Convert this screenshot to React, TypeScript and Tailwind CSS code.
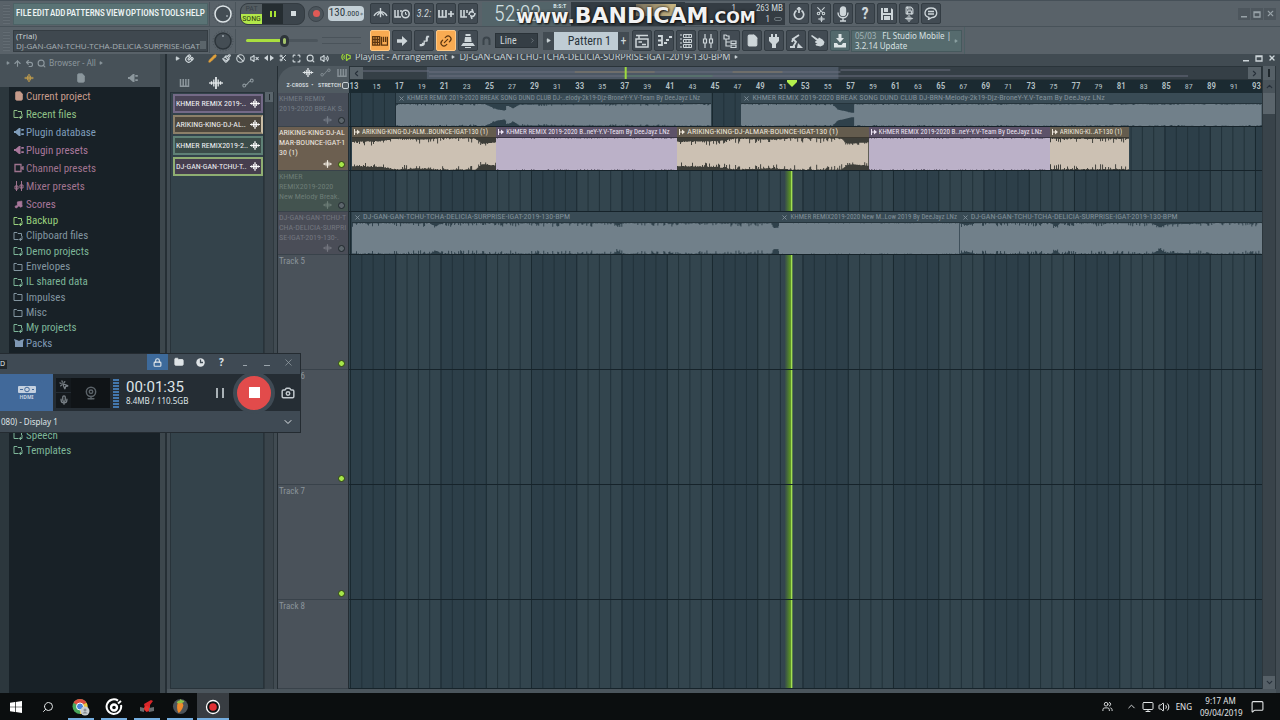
import React from "react";
import {
  ArrowUp, Ban, Camera, ChevronDown, ChevronLeft, ChevronRight, ChevronUp,
  File, Folder, Link2, Lock, Magnet, Maximize, Mic, MousePointerClick,
  Music, Pencil, Play, Save, Search, Undo2, Users,
  Volume2, VolumeX, Webcam, X, MessageSquare, Paintbrush, Monitor, Scissors,
} from "lucide-react";

const narrow = "font-['Roboto_Condensed','Roboto',sans-serif]";

/* ---------- small drawings ---------- */
function WaveIcon({ className = "h-3 w-3" }: { className?: string }) {
  return (
    <svg viewBox="0 0 14 12" className={className} fill="none" stroke="currentColor">
      <path d="M0 6h14" strokeWidth="1.300" />
      <path d="M2.500 4.200v3.600M4.800 2.500v7M9.200 2.500v7M11.500 4.200v3.600" strokeWidth="1.300" />
      <path d="M7 0v12" strokeWidth="1.800" />
    </svg>
  );
}
function PianoIcon({ className = "h-3 w-3" }: { className?: string }) {
  return (
    <svg viewBox="0 0 12 10" className={className} fill="none" stroke="currentColor" strokeWidth="1.900">
      <path d="M1 0v9h10V0M4.400 0v9M7.700 0v9" />
    </svg>
  );
}
function CurveIcon({ className = "h-3 w-3" }: { className?: string }) {
  return (
    <svg viewBox="0 0 14 12" className={className} fill="none" stroke="currentColor" strokeWidth="1.300">
      <circle cx="2.500" cy="9" r="1.700" />
      <circle cx="11.500" cy="3" r="1.700" />
      <path d="M4 8.500c3 0 3-4.500 6-5" />
    </svg>
  );
}
function MetronomeIcon() {
  return (
    <svg viewBox="0 0 16 14" className="h-[13px] w-[15px]" fill="none" stroke="currentColor" strokeWidth="1.500">
      <path d="M8 1v10M8 5 4.500 9M8 5l3.500 4M1 9.500C3 6 5 5 8 5s5 1 7 4.500" />
    </svg>
  );
}
function PianoClockIcon() {
  return (
    <svg viewBox="0 0 16 12" className="h-3 w-4" fill="none" stroke="currentColor" strokeWidth="1.500">
      <path d="M1 2v7h6M4 2v7M7 2v2" />
      <circle cx="11.500" cy="6" r="3.700" />
      <path d="M11.500 4v2.300H13" strokeWidth="1" />
    </svg>
  );
}
function PianoPlusIcon() {
  return (
    <svg viewBox="0 0 16 12" className="h-3 w-4" fill="none" stroke="currentColor" strokeWidth="1.700">
      <path d="M1 2v7h7V2M4.500 2v7M10 6h6M13 3v6" />
    </svg>
  );
}
function PianoLoopIcon() {
  return (
    <svg viewBox="0 0 16 12" className="h-3 w-4" fill="none" stroke="currentColor" strokeWidth="1.600">
      <path d="M1 2v7h6M4 2v7M7 2v3M9 7c0-3 2-4 4-3l-1-3M15 5c0 3-2 4-4 3l1 3" />
    </svg>
  );
}
function TypeKeysIcon() {
  return (
    <svg viewBox="0 0 16 10" className="h-[10px] w-4" fill="none" stroke="currentColor" strokeWidth="1.300">
      <path d="M.7.700h7v8.500h-7zM1 3.500h6M1 6.300h6M3 1v8M5.400 1v8M9.500.700v8.500h6V.7M11.500.700v5.300M13.600.700v5.300" />
    </svg>
  );
}
function NotesIcon() {
  return (
    <svg viewBox="0 0 14 14" className="h-3 w-3" fill="currentColor">
      <path d="M10 1h3v2h-1.500v3c0 1-.5 2-2 2H8v2c0 2-1.500 3-4 3H2v-2.500h2.500V9h2V6.500h2.500V3.500z" />
    </svg>
  );
}
function BlenderIcon() {
  return (
    <svg viewBox="0 0 14 14" className="h-[14px] w-[14px]" fill="currentColor">
      <path d="M4.500 0h5v2h-5zM4 3h6l.6 5H3.400zM2 9h10l2 3H0zM4 13h6v1H4z" />
    </svg>
  );
}
function PlaylistIcon() {
  return (
    <svg viewBox="0 0 14 14" className="h-[14px] w-[14px]" fill="none" stroke="currentColor" strokeWidth="1.500">
      <path d="M1 1.500h12M1 5h12v8H1zM3.500 8H7M7 10.500h4M4 1.500v3" />
    </svg>
  );
}
function RollIcon() {
  return (
    <svg viewBox="0 0 15 13" className="h-[13px] w-[15px]" fill="none" stroke="currentColor" strokeWidth="1.800">
      <path d="M1 2h4v9H1M1 6.500h4M7 9h3M9 6h3M12 3h3" />
    </svg>
  );
}
function RackIcon() {
  return (
    <svg viewBox="0 0 14 14" className="size-[14px]" fill="none" stroke="currentColor" strokeWidth="1">
      <path d="M1 1h2M1 5h2M1 9h2M1 13h2M4.500.500h8v3h-8zM4.500 5.500h8v3h-8zM4.500 10.500h8v3h-8zM7 .500v3M10 .500v3M7 5.500v3M10 5.500v3M7 10.500v3M10 10.500v3" />
    </svg>
  );
}
function MixerIcon() {
  return (
    <svg viewBox="0 0 12 14" className="h-[14px] w-3" fill="none" stroke="currentColor" strokeWidth="1.200">
      <path d="M3 0v5M3 9v5M9 0v5M9 9v5M1.500 5h3v4h-3zM7.500 5h3v4h-3z" />
    </svg>
  );
}
function TreeIcon() {
  return (
    <svg viewBox="0 0 14 14" className="size-[14px]" fill="none" stroke="currentColor" strokeWidth="1.200">
      <path d="M1 1h2l1 1h2v3H1zM3 5v7h4M3 8h4M8 7h5v2.500H8zM8 11h5v2.500H8z" />
    </svg>
  );
}
function PlugDownIcon() {
  return (
    <svg viewBox="0 0 12 14" className="h-[14px] w-3" fill="currentColor">
      <path d="M3 0h2v3h2V0h2v3h2v4L8 10v4H4v-4L1 7V3h2z" />
    </svg>
  );
}
function DiggerIcon() {
  return (
    <svg viewBox="0 0 14 14" className="size-[14px]" fill="none" stroke="currentColor" strokeWidth="1.800">
      <path d="M10 1 4 5l3 3-3 5M4 5l-1 3M1 13h5" />
      <path d="M9 9l5 5H8z" fill="currentColor" stroke="none" />
    </svg>
  );
}
function PointHandIcon() {
  return (
    <svg viewBox="0 0 14 12" className="h-3 w-[14px]" fill="currentColor">
      <path d="M0 1l1-1 6 4 1-1.500 3.500 2L13.500 7l-1 3-3 1.500L5 10.500l-.5-1.500 2-.5L4 7.500l.5-1.500L6 6z" />
    </svg>
  );
}
function DropIcon() {
  return (
    <svg viewBox="0 0 14 14" className="size-[14px]" fill="currentColor">
      <path d="M5.500 0h3v4H11L7 8.500 3 4h2.500zM1 9h3l1.500 2h3L10 9h3v4.500H1z" />
    </svg>
  );
}
function WinMin() {
  return <svg viewBox="0 0 8 8" className="h-2 w-2"><path d="M1 6h6v1.500H1z" fill="currentColor" /></svg>;
}
function WinMax() {
  return <svg viewBox="0 0 8 8" className="h-2 w-2"><path d="M1 2h6v5H1zM1 2.700h6" fill="none" stroke="currentColor" strokeWidth="1.300" /></svg>;
}
function FolderIcon({ arrow }: { arrow?: boolean }) {
  return (
    <svg viewBox="0 0 11 10" className="h-[10px] w-[11px]" fill="none" stroke="currentColor" strokeWidth="1">
      {arrow ? <path d="M5.500 8.500H1v-7h3l1 1h3.500V5M9 5v3.500H6.500M8 6.800 6.300 8.500 8 10" /> : <path d="M1 8.500v-7h2.500l1 1H9v6z" />}
    </svg>
  );
}
function PlugIcon({ className = "h-[10px] w-[10px]" }: { className?: string }) {
  return (
    <svg viewBox="0 0 10 10" className={className} fill="currentColor">
      <path d="M0 4h1.500L5 1h1.500v8H5L1.500 6H0zM7.300 2h2.500v1.800H7.300zM7.300 6.200h2.500V8H7.300z" />
    </svg>
  );
}

/* ---------- toolbar ---------- */
function ToolButton({ label, children, tone = "dark" }: { label: string; children: React.ReactNode; tone?: "dark" | "lit" | "teal" }) {
  const bg =
    tone === "lit"
      ? "bg-[#f9ab52] border-[#ffc985] text-[#5b3510]"
      : tone === "teal"
        ? "bg-[#52696c] border-[#41555a] text-[#dde5e6]"
        : "bg-[#424b53] border-[#333c43] text-[#ced6da]";
  return (
    <button aria-label={label} className={"flex h-[21px] w-5 shrink-0 items-center justify-center rounded-xs border " + bg}>
      {children}
    </button>
  );
}

function Knob({ bright }: { bright?: boolean }) {
  return (
    <svg viewBox="0 0 24 24" className="h-6 w-6">
      <circle cx="12" cy="12" r="10" fill="none" stroke="#434c53" strokeWidth="1" strokeDasharray="1 2" />
      <circle cx="12" cy="12" r="8" fill="#444d54" stroke={bright ? "#dce3e6" : "#2c343a"} strokeWidth="1.500" />
      <circle cx={bright ? 16 : 12} cy={bright ? 14 : 7} r="1" fill="#9ba5ab" />
    </svg>
  );
}

function Grip() {
  return <div className="h-5 w-[7px] shrink-0 bg-[repeating-linear-gradient(0deg,#636c73_0px,#636c73_1px,#565f66_1px,#565f66_3px)]" />;
}

function Toolbar() {
  return (
    <header className={"relative z-10 shrink-0 bg-[#596269] text-[#cfd7da] " + narrow}>
      <div className="flex h-[27px] items-center border-t border-b border-t-[#465058] border-b-[#485259]">
        <div className="flex w-[13px] shrink-0 justify-center"><Grip /></div>
        <nav className="flex h-[22px] w-[195px] shrink-0 items-center justify-between border border-[#4c6265] bg-[#5a7375] px-[2px] text-[9px] font-medium text-[#eef4f4]">
          {["FILE", "EDIT", "ADD", "PATTERNS", "VIEW", "OPTIONS", "TOOLS", "HELP"].map((m) => (
            <button key={m}>{m}</button>
          ))}
        </nav>
        <div className="ml-px flex w-[27px] shrink-0 justify-center border-x border-[#4a545b]"><Knob bright /></div>
        <div className="ml-1 flex h-[22px] w-[65px] shrink-0 overflow-hidden rounded-lg border border-[#343c42] bg-[#333b42]">
          <button className="flex w-[21px] flex-col text-center text-[8px] leading-[10px]">
            <span className="w-full bg-[#535c61] text-[#394147]">PAT</span>
            <span className="w-full bg-[#b2e84a] text-[#2c3a12]">SONG</span>
          </button>
          <button aria-label="Pause" className="flex w-[21px] items-center justify-center gap-[2px] bg-[#252d31]">
            <i className="h-[6px] w-[2px] bg-[#a9e234]" />
            <i className="h-[6px] w-[2px] bg-[#a9e234]" />
          </button>
          <button aria-label="Stop" className="flex flex-1 items-center justify-center bg-[#3c454c]">
            <i className="size-[5px] bg-[#d5dcdf]" />
          </button>
        </div>
        <button aria-label="Record" className="ml-[3px] flex size-4 shrink-0 items-center justify-center rounded-full border border-[#3c444b] bg-[#4b545b]">
          <i className="size-[7px] rounded-full bg-[#e05a56]" />
        </button>
        <div className="ml-1 flex h-[15px] w-9 shrink-0 items-center justify-center rounded-sm bg-[#c3cfd6] text-[11px] text-[#2d3840]">
          130<span className="text-[8px]">.000</span><span className="pl-px text-[4px] text-[#7c8990]">◆</span>
        </div>
        <div className="ml-[6px] flex shrink-0 gap-[2px]">
          <ToolButton label="Metronome"><MetronomeIcon /></ToolButton>
          <ToolButton label="Wait for input"><PianoClockIcon /></ToolButton>
          <ToolButton label="Countdown"><i className="text-[10px]">3.2:</i></ToolButton>
          <ToolButton label="Overdub"><PianoPlusIcon /></ToolButton>
          <ToolButton label="Loop recording"><PianoLoopIcon /></ToolButton>
        </div>
        <div className="ml-1 flex h-6 w-[85px] shrink-0 bg-[#536469] pl-3 text-[22px] leading-6 font-light text-[#d3e1e3]">
          52:02<span className="pl-3 text-[6px] leading-[8px] font-bold">B:S:T</span>
        </div>
        <div className="ml-1 flex h-6 w-[114px] shrink-0 justify-center bg-[#323b42]">
          <i className="ml-14 mt-[2px] h-3 w-10 bg-gradient-to-r from-[#77705e] to-[#cdb983]" />
        </div>
        <div className="flex h-[22px] w-[100px] shrink-0 flex-col bg-[#343c43] px-[2px] text-[9px] leading-[11px]">
          <div className="flex justify-end gap-5"><span>1</span><span>263 MB</span></div>
          <div className="flex items-center justify-end gap-1"><span>1</span><i className="mr-px h-1 w-2 rounded-full border border-[#6c767c]" /></div>
        </div>
        <div className="ml-1 flex shrink-0 gap-[2px]">
          <ToolButton label="Restart"><svg viewBox="0 0 14 14" className="size-[14px]" fill="none" stroke="currentColor" strokeWidth="1.700"><path d="M4.500 3.500a4.700 4.700 0 1 0 5 0M7 6V1M5 2.500 7 .500l2 2" /></svg></ToolButton>
          <ToolButton label="Cut"><span className="flex flex-col items-center"><Scissors size={10} strokeWidth={2.5} className="-rotate-90" /><WaveIcon className="h-[6px] w-[9px]" /></span></ToolButton>
          <ToolButton label="Record audio"><svg viewBox="0 0 12 16" className="h-4 w-3" fill="none" stroke="currentColor" strokeWidth="1.400"><rect x="3.500" y="1" width="5" height="8.500" rx="2.500" fill="currentColor" /><path d="M1 6.500c0 7 10 7 10 0M6 12v3M3 15h6" /></svg></ToolButton>
          <ToolButton label="Help"><b className="text-[16px]">?</b></ToolButton>
          <ToolButton label="Save"><svg viewBox="0 0 12 12" className="size-3" fill="currentColor"><path d="M0 0h2v5h8V0l2 1.500V12h-2V7H2v5H0zM3 0h4v4H3zM3 8h6v4H3z" /></svg></ToolButton>
          <ToolButton label="Render"><span className="flex flex-col items-center"><Save size={9} strokeWidth={3} /><WaveIcon className="h-[7px] w-[10px]" /></span></ToolButton>
          <ToolButton label="Feedback"><svg viewBox="0 0 14 13" className="h-[13px] w-[14px]" fill="none" stroke="currentColor" strokeWidth="1.300"><path d="M5 10.500C-1 9 0 1 7 1s8 9 .5 9.700L4.500 12.500zM4 4.500h6M4 7h6" /></svg></ToolButton>
        </div>
        <div className="ml-auto mr-1 flex shrink-0 gap-px text-[#98a2a8]">
          <button aria-label="Minimize" className="flex size-3 items-center justify-center bg-[#4d565d]"><WinMin /></button>
          <button aria-label="Maximize" className="flex size-3 items-center justify-center bg-[#4d565d]"><WinMax /></button>
          <button aria-label="Close" className="flex size-3 items-center justify-center bg-[#4d565d]"><X size={9} strokeWidth={3} /></button>
        </div>
      </div>
      <div className="flex h-[27px] items-center">
        <div className="flex w-[13px] shrink-0 justify-center"><Grip /></div>
        <div className="flex h-[22px] w-[195px] shrink-0 items-end justify-between border border-[#343c42] bg-[#3f484f] px-[2px] font-['Open_Sans'] text-[8px] leading-[10px]">
          <div className="whitespace-nowrap"><div>(Trial)</div><div className="text-[#a7b0b5]">DJ-GAN-GAN-TCHU-TCHA-DELICIA-SURPRISE-IGAT</div></div>
          <i className="mb-[2px] h-2 w-[6px] shrink-0 bg-[#5b656b]" />
        </div>
        <div className="ml-px flex w-[27px] shrink-0 justify-center border-x border-[#4a545b]"><Knob /></div>
        <input
          type="range" aria-label="Song position" defaultValue={54}
          className="ml-[10px] h-[3px] w-[72px] shrink-0 appearance-none rounded-full bg-[linear-gradient(90deg,#a9df3f_50%,#4c555c_50%)] [&::-webkit-slider-thumb]:h-3 [&::-webkit-slider-thumb]:w-[9px] [&::-webkit-slider-thumb]:appearance-none [&::-webkit-slider-thumb]:rounded-full [&::-webkit-slider-thumb]:border-3 [&::-webkit-slider-thumb]:border-[#2e353a] [&::-webkit-slider-thumb]:bg-[#a4c46a]"
        />
        <div className="ml-1 h-[7px] w-[39px] shrink-0 border-y border-[#4a535a]" />
        <div className="ml-[9px] flex shrink-0 gap-[2px]">
          <ToolButton label="Typing keyboard" tone="lit"><TypeKeysIcon /></ToolButton>
          <ToolButton label="Step edit"><svg viewBox="0 0 12 10" className="h-[10px] w-3" fill="currentColor"><path d="M1 3.300h5V0l5.500 5L6 10V6.700H1z" /></svg></ToolButton>
          <ToolButton label="Note colour"><NotesIcon /></ToolButton>
          <ToolButton label="Link" tone="lit"><Link2 size={14} className="-rotate-45" /></ToolButton>
          <ToolButton label="Multilink"><BlenderIcon /></ToolButton>
        </div>
        <svg viewBox="0 0 9 9" className="ml-1 size-[9px] shrink-0" fill="none" stroke="#3b444b" strokeWidth="2"><path d="M1.500 9V4.500a3 3 0 0 1 6 0V9" /></svg>
        <div className="relative ml-1 h-[15px] w-[43px] shrink-0">
          <select aria-label="Snap" className="block h-[15px] w-full appearance-none border border-[#2a3238] bg-[#353e45] pl-1 text-[10px] leading-3 text-[#cdd5d8]"><option>Line</option></select>
          <ChevronRight size={7} className="pointer-events-none absolute right-[2px] top-1 text-[#8b959b]" />
        </div>
        <div className="ml-[5px] flex h-[18px] shrink-0 bg-[#424b52]">
          <button aria-label="Pattern menu" className="flex w-[11px] items-center justify-center"><Play size={5} fill="currentColor" /></button>
          <input aria-label="Pattern name" defaultValue="Pattern 1" className="w-[64px] bg-[#bfccd4] pr-[7px] text-right text-[12px] text-[#28333b]" />
          <button aria-label="Add pattern" className="flex w-[11px] items-center justify-center text-[12px]">+</button>
        </div>
        <div className="ml-[3px] flex shrink-0 gap-[2px]">
          <ToolButton label="Playlist"><PlaylistIcon /></ToolButton>
          <ToolButton label="Piano roll"><RollIcon /></ToolButton>
          <ToolButton label="Channel rack"><RackIcon /></ToolButton>
          <ToolButton label="Mixer"><MixerIcon /></ToolButton>
          <ToolButton label="Browser"><TreeIcon /></ToolButton>
          <ToolButton label="Project"><File size={13} fill="currentColor" /></ToolButton>
          <ToolButton label="Plugins"><PlugDownIcon /></ToolButton>
          <ToolButton label="Tempo tapper"><DiggerIcon /></ToolButton>
          <ToolButton label="Touch"><PointHandIcon /></ToolButton>
          <ToolButton label="Update" tone="teal"><DropIcon /></ToolButton>
        </div>
        <a href="#news" className="ml-px flex h-[22px] w-[111px] shrink-0 items-center justify-between border border-[#46595d] bg-[#566b6e] px-[3px] font-['Noto_Sans'] text-[8px] leading-[10px] text-[#d6e0e1]">
          <span className="whitespace-nowrap"><span className="pr-1 text-[#a3b4b6]">05/03</span> FL Studio Mobile |<br />3.2.14 Update</span>
          <Play size={4} fill="currentColor" className="text-[#8ea3a5]" />
        </a>
        <div className="ml-[2px] h-full border-l border-[#4c5f63]" />
      </div>
    </header>
  );
}

/* ---------- browser ---------- */
type Entry = { name: string; color: string; icon: React.ReactNode };
const topEntries: Entry[] = [
  { name: "Current project", color: "text-[#c69b8b]", icon: <File size={10} fill="currentColor" /> },
  { name: "Recent files", color: "text-[#8fc086]", icon: <FolderIcon arrow /> },
  { name: "Plugin database", color: "text-[#7f9dbb]", icon: <PlugIcon /> },
  { name: "Plugin presets", color: "text-[#a8779b]", icon: <PlugIcon /> },
  { name: "Channel presets", color: "text-[#a0748f]", icon: <svg viewBox="0 0 10 10" className="size-[10px]" fill="none" stroke="currentColor" strokeWidth="1.300"><path d="M1 1.500h6v7H1zM9 3v4M7 5h2" /></svg> },
  { name: "Mixer presets", color: "text-[#a0748f]", icon: <svg viewBox="0 0 10 10" className="size-[10px]" fill="none" stroke="currentColor" strokeWidth="1"><path d="M2.500 0v10M7.500 0v10M1 5h3v3H1zM6 4h3v3H6z" /></svg> },
  { name: "Scores", color: "text-[#a8779b]", icon: <Music size={9} fill="currentColor" /> },
];
const folders: Entry[] = [
  { name: "Backup", color: "text-[#97cf7c]", icon: <FolderIcon arrow /> },
  { name: "Clipboard files", color: "text-[#8295a0]", icon: <FolderIcon arrow /> },
  { name: "Demo projects", color: "text-[#7db598]", icon: <FolderIcon arrow /> },
  { name: "Envelopes", color: "text-[#8295a0]", icon: <FolderIcon /> },
  { name: "IL shared data", color: "text-[#7db598]", icon: <FolderIcon arrow /> },
  { name: "Impulses", color: "text-[#8295a0]", icon: <FolderIcon /> },
  { name: "Misc", color: "text-[#8295a0]", icon: <FolderIcon /> },
  { name: "My projects", color: "text-[#7db598]", icon: <FolderIcon arrow /> },
  { name: "Packs", color: "text-[#7f98b4]", icon: <svg viewBox="0 0 10 10" className="size-[10px]" fill="currentColor"><path d="M0 1l3 1 2 1 2-1 3-1-1 3v5H1V4z" /></svg> },
];
const lastFolders: Entry[] = [
  { name: "Speech", color: "text-[#7db598]", icon: <FolderIcon arrow /> },
  { name: "Templates", color: "text-[#7db598]", icon: <FolderIcon arrow /> },
];

function EntryRow({ e }: { e: Entry }) {
  return (
    <li className={"flex items-center " + e.color}>
      <button className="flex items-center gap-[2px] whitespace-nowrap">
        <span className="flex w-[11px] justify-center">{e.icon}</span>
        {e.name}
      </button>
    </li>
  );
}

function BrowserPanel() {
  return (
    <aside className={"flex w-[167px] shrink-0 border-r-2 border-[#262f35] bg-[#3d474d] " + narrow}>
      <div className="flex w-[160px] flex-col">
        <div className="h-[33px] shrink-0 bg-[#475158] pt-[3px] text-[#8c979d]">
          <div className="flex h-3 items-center gap-[3px] pl-[6px] font-['Noto_Sans'] text-[8px]">
            <Play size={4} fill="currentColor" /><ArrowUp size={9} strokeWidth={3} /><Undo2 size={9} strokeWidth={3} /><Search size={9} strokeWidth={3} />
            <span>Browser - All</span><Play size={4} fill="currentColor" />
          </div>
          <div className="mt-px flex h-4 items-center justify-between pl-6 pr-[22px]">
            <WaveIcon className="h-2 w-[10px] text-[#c8a14b]" /><File size={10} fill="currentColor" /><PlugIcon />
          </div>
        </div>
        <div className="flex-1 border-l-[9px] border-[#2c373d] bg-[#182127] pl-1 text-[11px] leading-[15px]">
          <ul className="grid h-[126px] grid-rows-7">{topEntries.map((e) => <EntryRow key={e.name} e={e} />)}</ul>
          <ul className="grid h-[245px] grid-rows-16">
            {folders.map((e) => <EntryRow key={e.name} e={e} />)}
            <li className="row-span-5" />
            {lastFolders.map((e) => <EntryRow key={e.name} e={e} />)}
          </ul>
        </div>
      </div>
    </aside>
  );
}

/* ---------- playlist ---------- */
type Env = [number, number][];
function amp(env: Env, t: number) {
  for (let i = 1; i < env.length; i++) {
    if (t <= env[i][0]) {
      const [a, x] = env[i - 1];
      const [b, y] = env[i];
      return x + ((y - x) * (t - a)) / (b - a || 1);
    }
  }
  return env[env.length - 1][1];
}
/* One column per unit: peaks follow the envelope, gaps cut in towards the middle. */
function wavePath(n: number, env: Env, rough: number, seed: number) {
  let s = seed;
  const rnd = () => ((s = (s * 16807) % 2147483647), s / 2147483647);
  let d = "";
  for (let i = 0; i < n; i++) {
    const e = amp(env, i / n);
    const gap = rnd() < 0.3 ? 1 : 0.15;
    const a = Math.max(3, e * (1 - rough * gap * rnd()) * 50);
    const b = Math.max(3, e * (1 - rough * gap * rnd()) * 50);
    d += "M" + i + " " + (50 - a).toFixed(1) + "h1.050V" + (50 + b).toFixed(1) + "h-1.050z";
  }
  return d;
}

type Clip = { at: number; len: number; name: string; kind: "dim" | "sand" | "lilac"; env: Env; rough: number; tight?: boolean };
const full: Env = [[0, 1], [1, 1]];
const sandLong: Env = [[0, 0.78], [0.2, 0.82], [0.3, 0.98], [0.5, 0.92], [0.6, 1], [0.85, 1], [0.9, 0.66], [1, 0.74]];
const lilac = "KHMER REMIX 2019-2020 B..neY-Y.V-Team By DeeJayz LNz";
const dj = "DJ-GAN-GAN-TCHU-TCHA-DELICIA-SURPRISE-IGAT-2019-130-BPM";
const lanes: { height: string; clips: Clip[] }[] = [
  {
    height: "h-[34px]",
    clips: [
      { at: 47, len: 315, kind: "dim", rough: 0.14, tight: true, name: "KHMER REMIX 2019-2020 BREAK SONG DUND CLUB DJ-..elody-2k19-Djz-BroneY-Y.V-Team By DeeJayz LNz", env: [[0, 1], [0.28, 1], [0.32, 0.5], [0.345, 0.4], [0.35, 0.9], [0.37, 0.6], [0.39, 0.95], [1, 1]] },
      { at: 392, len: 520, kind: "dim", rough: 0.1, name: "KHMER REMIX 2019-2020 BREAK SONG DUND CLUB DJ-BRN-Melody-2k19-Djz-BroneY-Y.V-Team By DeeJayz LNz", env: [[0, 1], [0.175, 0.98], [0.185, 0.5], [0.213, 0.2], [0.216, 0.2], [0.217, 1], [1, 1]] },
    ],
  },
  {
    height: "h-[44px]",
    clips: [
      { at: 3, len: 144, kind: "sand", rough: 0.34, tight: true, name: "ARIKING-KING-DJ-ALM..BOUNCE-IGAT-130 (1)", env: sandLong },
      { at: 147, len: 181, kind: "lilac", rough: 0.05, tight: true, name: lilac, env: full },
      { at: 328, len: 191, kind: "sand", rough: 0.34, name: "ARIKING-KING-DJ-ALMAR-BOUNCE-IGAT-130 (1)", env: sandLong },
      { at: 519, len: 181, kind: "lilac", rough: 0.05, tight: true, name: lilac, env: full },
      { at: 700, len: 79, kind: "sand", rough: 0.34, tight: true, name: "ARIKING-KI..AT-130 (1)", env: [[0, 0.97], [1, 0.98]] },
    ],
  },
  { height: "h-[41px]", clips: [] },
  {
    height: "h-[43px]",
    clips: [
      { at: 3, len: 427, kind: "dim", rough: 0.24, name: dj, env: [[0, 1], [0.18, 1], [0.195, 0.8], [0.21, 1], [0.61, 1], [0.62, 0.82], [0.63, 1], [0.98, 1], [0.985, 0.7], [0.996, 0.7], [1, 1]] },
      { at: 430, len: 180, kind: "dim", rough: 0.03, tight: true, name: "KHMER REMIX2019-2020 New M..Low 2019 By DeeJayz LNz", env: full },
      { at: 610, len: 302, kind: "dim", rough: 0.22, name: dj, env: [[0, 0.97], [0.02, 0.85], [0.05, 1], [0.3, 1], [0.315, 0.75], [0.33, 1], [0.63, 1], [0.66, 0.75], [0.68, 0.92], [0.83, 1], [1, 1]] },
    ],
  },
  { height: "h-[115px]", clips: [] },
  { height: "h-[115px]", clips: [] },
  { height: "h-[115px]", clips: [] },
  { height: "flex-1", clips: [] },
];

const clipTone = {
  dim: { box: "text-[#82919a]", head: "bg-[#394b55] border-[#25343c]", body: "bg-[#2f414b]", wave: "#71808a" },
  sand: { box: "text-[#ebe4d8]", head: "bg-[#645c4e] border-[#3b3830]", body: "bg-[#3d3e39]", wave: "#ccc1b3" },
  lilac: { box: "text-[#ebe3f2]", head: "bg-[#5d5269] border-[#3a3446]", body: "bg-[#4b4456]", wave: "#bbb1c8" },
};

function ClipBox({ clip, seed }: { clip: Clip; seed: number }) {
  const tone = clipTone[clip.kind];
  return (
    <div className={"flex h-full min-w-0 flex-col overflow-hidden " + tone.box} style={{ flex: clip.len + " 1 0" }}>
      <div className={"flex h-[11px] shrink-0 items-center gap-[2px] border-b pl-[2px] leading-[10px] " + (clip.tight ? "text-[7px] " : "text-[8px] ") + tone.head}>
        {clip.kind === "dim" ? <X size={7} strokeWidth={3} className="shrink-0" /> : (
          <svg viewBox="0 0 6 6" className="size-[6px] shrink-0" fill="currentColor"><path d="M0 0h1v2.500h2V.5L6 3 3 5.500v-2H1V6H0z" /></svg>
        )}
        <span className="overflow-hidden whitespace-nowrap">{clip.name}</span>
      </div>
      <svg className={"block min-h-0 w-full flex-1 " + tone.body} viewBox={"0 0 " + clip.len + " 100"} preserveAspectRatio="none">
        <path d={wavePath(clip.len, clip.env, clip.rough, seed)} fill={tone.wave} />
      </svg>
    </div>
  );
}

function Lane({ lane, index }: { lane: (typeof lanes)[number]; index: number }) {
  const items: React.ReactNode[] = [];
  let x = 0;
  lane.clips.forEach((c, i) => {
    if (c.at > x) items.push(<div key={"gap" + i} style={{ flex: c.at - x + " 1 0" }} />);
    items.push(<ClipBox key={i} clip={c} seed={index * 97711 + i * 13101 + 7} />);
    x = c.at + c.len;
  });
  if (x < 912) items.push(<div key="rest" style={{ flex: 912 - x + " 1 0" }} />);
  return <div className={"relative flex shrink-0 border-b border-[#16232a] " + lane.height}>{items}</div>;
}

function GridBackdrop() {
  const bars = Array.from({ length: 82 }, (_, i) => i);
  const pct = (n: number) => ((1 + n * 11.3) / 912) * 100 + "%";
  return (
    <svg className="absolute inset-0 h-full w-full bg-[#33454e]">
      {bars.filter((b) => b % 8 === 0).map((b) => (
        <rect key={b} x={pct(b)} y="0" width={(45.2 / 912) * 100 + "%"} height="100%" fill="#2d3f49" />
      ))}
      {bars.map((b) => (
        <rect key={b} x={pct(b)} y="0" width="1" height="100%" fill={b % 4 ? "#22323a" : "#1a2930"} />
      ))}
      <defs>
        <linearGradient id="glow"><stop offset="0" stopColor="#5f9a25" stopOpacity="0" /><stop offset="1" stopColor="#5f9a1c" /></linearGradient>
      </defs>
      <rect x="47.700%" y="0" width=".7%" height="100%" fill="url(#glow)" />
      <rect x="48.400%" y="0" width="1.500" height="100%" fill="#a2e052" />
    </svg>
  );
}

type Head = { height: string; name: string; tone: string; kind: "off" | "on" | "plain" };
const plainTone = "bg-[#4a525a] text-[#8a949a] text-[9px]";
const heads: Head[] = [
  { height: "h-[34px]", name: "KHMER REMIX\n2019-2020 BREAK S.", tone: "bg-[#484e59] text-[#727a84] text-[8px]", kind: "off" },
  { height: "h-[44px]", name: "ARIKING-KING-DJ-AL\nMAR-BOUNCE-IGAT-1\n30 (1)", tone: "bg-[#6c5f50] text-[#f0eae0] text-[8px]", kind: "on" },
  { height: "h-[41px]", name: "KHMER\nREMIX2019-2020\nNew Melody Break.", tone: "bg-[#43534f] text-[#6c7c76] text-[8px]", kind: "off" },
  { height: "h-[43px]", name: "DJ-GAN-GAN-TCHU-T\nCHA-DELICIA-SURPRI\nSE-IGAT-2019-130-.", tone: "bg-[#4a4d57] text-[#73767f] text-[8px]", kind: "off" },
  { height: "h-[115px]", name: "Track 5", tone: plainTone, kind: "plain" },
  { height: "h-[115px]", name: "Track 6", tone: plainTone, kind: "plain" },
  { height: "h-[115px]", name: "Track 7", tone: plainTone, kind: "plain" },
  { height: "flex-1", name: "Track 8", tone: plainTone, kind: "plain" },
];

function TrackHead({ h }: { h: Head }) {
  return (
    <div className={"relative w-[70px] shrink-0 overflow-hidden border-b border-[#39424a] px-px pt-px leading-[10px] whitespace-pre " + h.height + " " + h.tone}>
      {h.name}
      {h.name !== "Track 8" && (
        <div className="absolute bottom-[2px] right-[3px] flex items-center gap-[6px]">
          {h.kind !== "plain" && <WaveIcon className="h-2 w-[9px]" />}
          <button
            aria-label={"Mute " + h.name}
            className={"size-[7px] rounded-full border " + (h.kind === "off" ? "border-[#20282d] bg-[#5c656b]" : "border-[#2c4210] bg-[#a7e64a]")}
          />
        </div>
      )}
    </div>
  );
}

const picks = [
  { name: "KHMER REMIX 2019-..", tone: "border-[#746a87] bg-[#4a4457]" },
  { name: "ARIKING-KING-DJ-AL..", tone: "border-[#8c8069] border-r-[#c9bda5] bg-[#4d473d]" },
  { name: "KHMER REMIX2019-2..", tone: "border-[#5f8176] bg-[#3b4c49]" },
  { name: "DJ-GAN-GAN-TCHU-T..", tone: "border-[#8fae72] bg-[#463e4e]" },
];

function Playlist() {
  const labels = Array.from({ length: 41 }, (_, i) => 13 + i * 2);
  return (
    <main className={"flex min-w-0 flex-1 flex-col bg-[#414b52] pr-1 " + narrow}>
      <div className="flex h-3 shrink-0 items-start overflow-hidden pl-2 text-[#cdd5d9]">
        <div className="-mt-[2px] flex h-3 w-[166px] shrink-0 items-center gap-[5px]">
          <Play size={5} fill="currentColor" /><Magnet size={9} strokeWidth={3} className="mr-[9px] rotate-180" /><Pencil size={9} className="text-[#e3a33c]" fill="currentColor" />
          <Paintbrush size={9} strokeWidth={3} /><Ban size={9} strokeWidth={3} /><VolumeX size={9} strokeWidth={3} />
          <svg viewBox="0 0 10 6" className="h-[6px] w-[10px]" fill="currentColor"><path d="M0 3l4-3v6zM10 3 6 0v6z" /></svg>
          <Scissors size={8} strokeWidth={3} /><Maximize size={9} strokeWidth={3} /><Search size={9} strokeWidth={3} /><Volume2 size={9} strokeWidth={3} />
        </div>
        <div className="-mt-[3px] flex h-3 items-center gap-1 whitespace-nowrap font-['Open_Sans'] text-[9px] leading-3">
          <Volume2 size={10} strokeWidth={3} className="-scale-x-100 text-[#9ad03a]" />
          <span>Playlist - Arrangement</span><Play size={4} fill="currentColor" /><span>DJ-GAN-GAN-TCHU-TCHA-DELICIA-SURPRISE-IGAT-2019-130-BPM</span><Play size={4} fill="currentColor" />
        </div>
        <div className="ml-auto flex h-2 gap-[5px]">
          <button aria-label="Minimize playlist"><WinMin /></button>
          <button aria-label="Maximize playlist"><WinMax /></button>
          <button aria-label="Close playlist"><X size={8} strokeWidth={4} /></button>
        </div>
      </div>
      <div className="flex min-h-0 flex-1">
        <section className="flex w-[97px] shrink-0 flex-col">
          <div className="flex h-[26px] items-center justify-between pl-3 pr-[10px] pt-2 text-[#8d979d]">
            <PianoIcon className="h-2 w-[11px]" /><WaveIcon className="h-3 w-[14px] text-[#e3e8ea]" /><CurveIcon className="h-[10px] w-3" />
          </div>
          <div className="ml-[3px] flex flex-1 flex-col gap-[2px] border border-[#28333a] bg-[#34434b] py-px pl-[2px]">
            {picks.map((p) => (
              <button key={p.name} className={"flex h-[19px] items-center justify-between border-2 px-px text-[8px] text-[#f0f2f4] " + p.tone}>
                <span className="whitespace-nowrap">{p.name}</span><WaveIcon className="h-[9px] w-[10px] shrink-0 text-white" />
              </button>
            ))}
          </div>
        </section>
        <div className="mt-[26px] flex w-[10px] shrink-0 flex-col border-x border-[#2e383e] bg-[#3a444b]">
          <div className="h-[10px] bg-[#59646b] pt-[2px]"><i className="mx-auto block h-[6px] w-px bg-[#242c31]" /></div>
        </div>
        <div className="ml-[3px] flex w-[72px] shrink-0 flex-col border-l border-[#242d33]">
          <div className="h-[27px] shrink-0 rounded-tl-[18px] bg-[#505a61] text-[#858f95]">
            <div className="flex h-[13px] items-center justify-end gap-[6px] pr-[2px]">
              <WaveIcon className="h-[9px] w-3 text-[#e3e8ea]" /><CurveIcon className="h-[9px] w-[11px]" /><PianoIcon className="h-2 w-[10px]" />
            </div>
            <div className="flex h-3 items-center justify-end whitespace-nowrap text-[6px] font-bold leading-3 text-[#c8d0d4]">
              Z-CROSS&nbsp; •&nbsp; <label className="flex items-center gap-px pl-[3px]">STRETCH<input type="checkbox" className="size-[7px] appearance-none rounded-xs border border-[#c8d0d4]" /></label>
            </div>
          </div>
          <div className="flex min-h-0 flex-1 flex-col border-r-2 border-[#242d33]">{heads.map((h) => <TrackHead key={h.name} h={h} />)}</div>
        </div>
        <section className="flex min-w-0 flex-1 flex-col">
          <div className="flex h-[14px] shrink-0 border border-[#2a343a] bg-[#353f46] text-[#27303a]">
            <button aria-label="Scroll left" className="flex w-[13px] items-center justify-center bg-[#59636a]"><ChevronLeft size={9} strokeWidth={3} /></button>
            <svg className="h-full min-w-0 flex-1" preserveAspectRatio="none" viewBox="0 0 886 12">
              <rect x="64" width="412" height="12" fill="#4d5865" />
              <path d="M0 4h66M66 5h412M478 3h110M66 9h760" stroke="#6b6f80" strokeWidth="1" />
              <path d="M212 5h80M370 5h50" stroke="#857a66" strokeWidth="1" />
              <path d="M260 9h90" stroke="#547f68" strokeWidth="1" />
              <path d="M263 0v12" stroke="#9edb3d" strokeWidth="2" />
            </svg>
            <button aria-label="Scroll right" className="flex w-[13px] items-center justify-center bg-[#59636a]"><ChevronRight size={9} strokeWidth={3} /></button>
          </div>
          <div className="relative flex h-[13px] shrink-0 items-center justify-between overflow-hidden bg-[#1b2a31] px-[5px] text-[#b5c1c6]">
            {labels.map((n, i) => (
              <span key={n} className="flex w-0 justify-center"><span className={i % 2 === 0 ? "text-[9px] font-medium" : "text-[8px]"}>{n}</span></span>
            ))}
            <svg viewBox="0 0 10 7" className="absolute left-[48.500%] top-0 h-[7px] w-[10px] -translate-x-1/2"><path d="M0 0h10v2L5 7 0 2z" fill="#b4f04c" /></svg>
          </div>
          <div className="relative flex min-h-0 flex-1 flex-col overflow-hidden">
            <GridBackdrop />
            {lanes.map((l, i) => <Lane key={i} lane={l} index={i} />)}
          </div>
        </section>
        <div className="flex w-[14px] shrink-0 flex-col border-x border-[#2c363c] bg-[#39434a] text-[#27303a]">
          <div className="flex h-[14px] items-center justify-center bg-[#566067]"><i className="h-2 w-[2px] bg-[#20282d]" /></div>
          <button aria-label="Scroll up" className="flex h-[13px] items-center justify-center bg-[#4a545b]"><ChevronUp size={9} strokeWidth={3} /></button>
          <div className="h-[21px] bg-[#5b656c]" />
          <button aria-label="Scroll down" className="mt-auto flex h-[13px] items-center justify-center bg-[#566067]"><ChevronDown size={9} strokeWidth={3} /></button>
        </div>
      </div>
      <div className="h-1 shrink-0 bg-[#4b555c]" />
    </main>
  );
}

/* ---------- recorder window ---------- */
function Recorder() {
  return (
    <section className="absolute left-0 top-[353px] z-20 flex h-[80px] w-[301px] flex-col border border-l-0 border-[#242b31] bg-[#3f4a54] font-['Noto_Sans'] text-[#dfe4e7]">
      <div className="flex h-5 shrink-0 items-start justify-end">
        <span className="mr-auto mt-[6px] h-[9px] bg-[#20262b] pr-[2px] text-[7px] leading-[8px]">D</span>
        <button aria-label="Lock" className="flex h-4 w-[21px] items-center justify-center bg-[#3d6a9b]"><Lock size={9} strokeWidth={3} /></button>
        <button aria-label="Open folder" className="flex h-4 w-[22px] items-center justify-center"><Folder size={10} fill="currentColor" /></button>
        <button aria-label="History" className="flex h-4 w-[21px] items-center justify-center"><svg viewBox="0 0 10 10" className="size-[9px]"><circle cx="5" cy="5" r="4.700" fill="currentColor" /><path d="M5 1.800V5h2.800" stroke="#3f4a54" strokeWidth="1.400" fill="none" /></svg></button>
        <button aria-label="Help" className="flex h-4 w-[21px] items-center justify-center text-[10px] font-bold">?</button>
        <button aria-label="Tray" className="flex h-4 w-[26px] items-end justify-center pb-1"><i className="h-px w-1 bg-[#9aa4ab]" /></button>
        <button aria-label="Minimize recorder" className="flex h-4 w-[18px] items-end justify-center pb-1"><i className="h-px w-[6px] bg-[#9aa4ab]" /></button>
        <button aria-label="Close recorder" className="flex h-4 w-[24px] items-center justify-center text-[#9aa4ab]"><X size={11} strokeWidth={1.5} /></button>
      </div>
      <div className="flex h-[37px] shrink-0 items-center bg-[#252d34]">
        <button aria-label="HDMI source" className="flex h-full w-[53px] flex-col items-center justify-center bg-[#41699a] text-[#c4d0df]">
          <svg viewBox="0 0 18 8" className="h-2 w-[18px]"><rect width="18" height="7" rx="1" fill="currentColor" /><circle cx="9" cy="3.500" r="2.300" fill="none" stroke="#41699a" /><path d="M2 3.500h3M14 3.500h2" stroke="#41699a" /></svg>
          <span className="text-[5px] font-bold leading-[6px]">HDMI</span>
        </button>
        <div className="ml-[3px] flex h-[30px] w-[15px] flex-col gap-px text-[#7a8288]">
          <i className="flex flex-1 items-center justify-center bg-[#14191d]"><MousePointerClick size={10} strokeWidth={3} /></i>
          <i className="flex flex-1 items-center justify-center bg-[#14191d]"><Mic size={10} strokeWidth={3} /></i>
        </div>
        <button aria-label="Webcam" className="flex h-[30px] w-[39px] items-center justify-center bg-[#101417] text-[#5b6369]"><Webcam size={14} strokeWidth={2.5} /></button>
        <i className="ml-[3px] h-[30px] w-[6px] bg-[repeating-linear-gradient(0deg,#4377ad_0px,#4377ad_2px,#252d34_2px,#252d34_3px)]" />
        <div className="ml-[7px] w-[84px]">
          <div className="font-['Roboto'] text-[15px] leading-[16px]">00:01:35</div>
          <div className="whitespace-nowrap text-[8px] leading-[12px]">8.4MB / 110.5GB</div>
        </div>
        <button aria-label="Pause recording" className="ml-[5px] flex gap-1 px-px"><i className="h-[10px] w-[2px] bg-[#aab2b7]" /><i className="h-[10px] w-[2px] bg-[#aab2b7]" /></button>
        <button aria-label="Stop recording" className="ml-[8px] flex size-[42px] shrink-0 items-center justify-center rounded-full border-4 border-[#3f4a54] bg-[#e24b4b]"><i className="size-[11px] bg-white" /></button>
        <button aria-label="Screenshot" className="ml-[6px] text-[#c3cacf]"><Camera size={14} strokeWidth={2.5} /></button>
      </div>
      <div className="flex flex-1 items-center justify-between pl-px pr-[6px] text-[8px]">
        <span>080) - Display 1</span><ChevronDown size={12} />
      </div>
    </section>
  );
}

/* ---------- taskbar ---------- */
function TaskItem({ label, children, open, active }: { label: string; children: React.ReactNode; open?: boolean; active?: boolean }) {
  return (
    <button aria-label={label} className={"relative flex w-8 items-center justify-center " + (active ? "bg-[#383d42]" : "")}>
      {children}
      {open && <i className={"absolute bottom-0 h-[2px] bg-[#75aee0] " + (active ? "w-8" : "w-[26px]")} />}
    </button>
  );
}

function Taskbar() {
  return (
    <footer className="flex h-[27px] shrink-0 items-stretch bg-[#0b0e0f] text-[#e2e5e6]">
      <TaskItem label="Start"><svg viewBox="0 0 12 12" className="size-3" fill="#fff"><path d="M0 1.700 5 1v4.700H0zM5.700.9 12 0v5.700H5.700zM0 6.300h5V11l-5-.7zM5.700 6.300H12V12l-6.300-.9z" /></svg></TaskItem>
      <TaskItem label="Search"><Search size={12} className="-scale-x-100" /></TaskItem>
      <div className="ml-px flex gap-px">
        <TaskItem label="Chrome" open>
          <svg viewBox="0 0 18 18" className="size-[18px]"><circle cx="8" cy="8.500" r="7.500" fill="#4aa85c" /><path d="M8 8.500 1.500 4.700A7.500 7.500 0 0 1 14.500 4.700z" fill="#de4f42" /><path d="M8 8.500 14.500 4.700A7.500 7.500 0 0 1 8 16z" fill="#f1c43b" /><circle cx="8" cy="8.500" r="3.500" fill="#4a85dc" stroke="#fff" /><circle cx="13" cy="13" r="4.500" fill="#c9cdd0" /><circle cx="13" cy="12" r="1.500" fill="#8a9095" /><path d="M10.500 15.500c.5-2 4.500-2 5 0" fill="#8a9095" /></svg>
        </TaskItem>
        <TaskItem label="Media player" open>
          <svg viewBox="0 0 18 18" className="size-[18px]" fill="none" stroke="#fff"><path d="M13 2.600A7.300 7.300 0 1 0 16 7" strokeWidth="2" /><circle cx="9" cy="9.500" r="3" strokeWidth="2.400" /><path d="M13 5.500 16 3" strokeWidth="2" /></svg>
        </TaskItem>
        <TaskItem label="Red tool" open>
          <svg viewBox="0 0 16 16" className="size-4"><path d="M5 5 12 1l2 1-3 4v6l-4 1z" fill="#d9262a" /><path d="M1 8l4 1v4l-4-1zM10 9l5-1v4l-5 1z" fill="#686d70" /><circle cx="7.500" cy="9.500" r="2.500" fill="#e7332f" /></svg>
        </TaskItem>
        <TaskItem label="FL Studio" open>
          <svg viewBox="0 0 18 18" className="size-[17px]"><circle cx="9" cy="9" r="8" fill="#4c5359" /><path d="M6 5c3-2 6 0 6 3-1 4-3 7-5 8-2-3-2-8-1-11z" fill="#ef8a2b" /><path d="M5 5c1-3 3-1 4-4 1 2 4 1 4 3-3 2-5 2-8 1z" fill="#8dc24a" /></svg>
        </TaskItem>
        <TaskItem label="Recorder" open active>
          <svg viewBox="0 0 16 16" className="size-4"><circle cx="8" cy="8" r="6.500" fill="#101314" stroke="#fff" strokeWidth="1.300" /><circle cx="8" cy="8" r="3.800" fill="#e23034" /></svg>
        </TaskItem>
      </div>
      <div className="ml-auto flex items-center font-['Noto_Sans'] text-[8px]">
        <Users size={11} className="mr-[13px]" /><ChevronUp size={11} className="mr-[5px]" /><Monitor size={12} className="mr-1" /><Volume2 size={12} className="mr-[6px]" />
        <span className="mr-2">ENG</span>
        <div className="w-[41px] whitespace-nowrap text-center leading-[12px]"><div>9:17 AM</div><div>09/04/2019</div></div>
        <MessageSquare size={13} className="ml-[10px] mr-4" />
      </div>
    </footer>
  );
}

export default function App() {
  return (
    <div className="relative flex h-screen min-h-[560px] w-full flex-col overflow-hidden bg-[#414b52]">
      <Toolbar />
      <div className="flex min-h-0 flex-1"><BrowserPanel /><Playlist /></div>
      <Taskbar />
      <Recorder />
      <div className="pointer-events-none absolute left-[516px] top-[5px] z-30 flex items-baseline whitespace-nowrap font-['DejaVu_Sans'] font-bold leading-[22px] text-[#f2f2f2] [text-shadow:0_0_3px_#111,1px_1px_2px_#111]">
        <span className="text-[19px]">www.</span><span className="text-[22px]">BANDICAM</span><span className="text-[16px]">.COM</span>
      </div>
    </div>
  );
}
